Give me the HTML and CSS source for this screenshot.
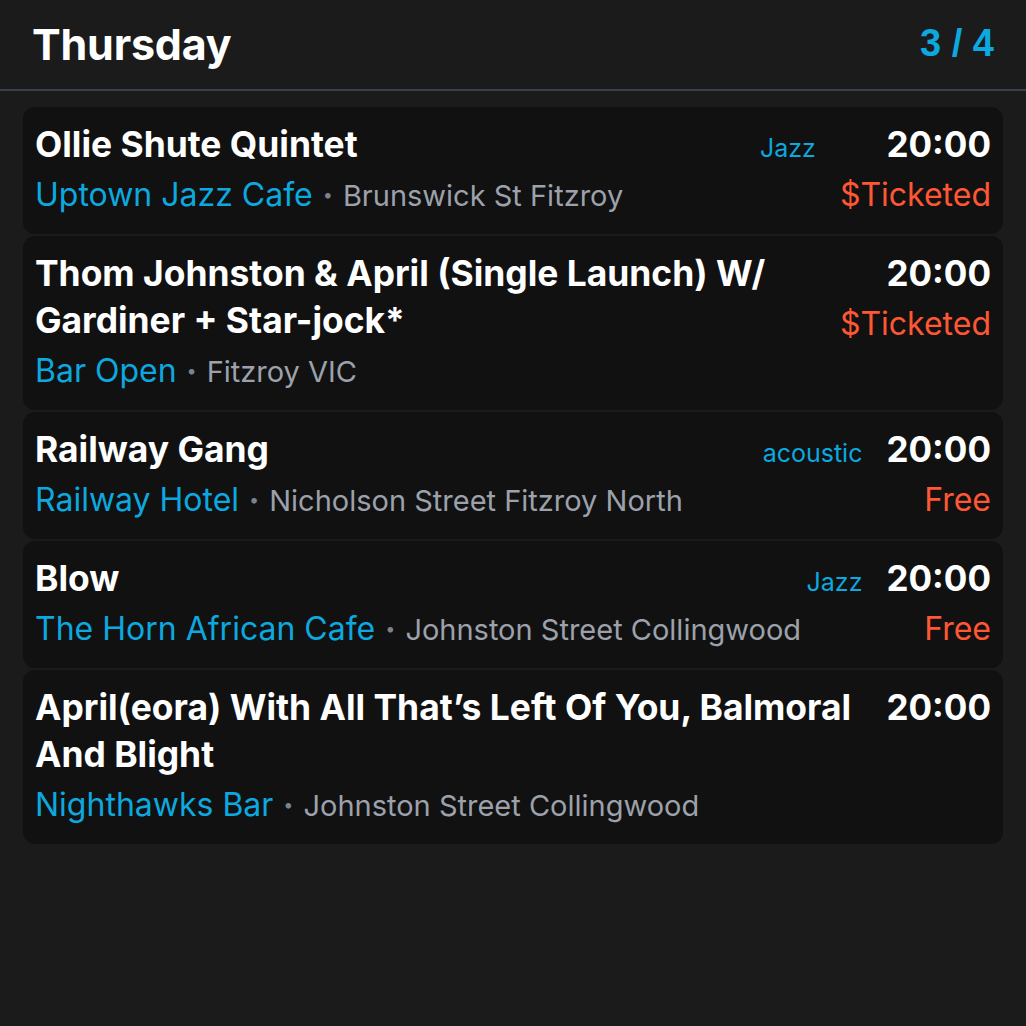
FILE: index.html
```html
<!DOCTYPE html>
<html>
<head>
<meta charset="utf-8">
<link rel="stylesheet" href="styles.css">
</head>
<body>
<div class="screen">
  <header class="topbar">
    <h1 class="day">Thursday</h1>
    <div class="pager">3 / 4</div>
  </header>
  <main class="list">
    <article class="card">
      <div class="main">
        <div class="title-row">
          <div class="title">Ollie Shute Quintet</div>
          <div class="genre">Jazz</div>
        </div>
        <div class="venue"><span class="venue-name">Uptown Jazz Cafe</span><span class="dot">•</span><span class="addr">Brunswick St Fitzroy</span></div>
      </div>
      <div class="side">
        <div class="time">20:00</div>
        <div class="price">$Ticketed</div>
      </div>
    </article>
    <article class="card">
      <div class="main">
        <div class="title-row">
          <div class="title">Thom Johnston &amp; April (Single Launch) W/ Gardiner + Star-jock*</div>
        </div>
        <div class="venue"><span class="venue-name">Bar Open</span><span class="dot">•</span><span class="addr">Fitzroy VIC</span></div>
      </div>
      <div class="side">
        <div class="time">20:00</div>
        <div class="price">$Ticketed</div>
      </div>
    </article>
    <article class="card">
      <div class="main">
        <div class="title-row">
          <div class="title">Railway Gang</div>
          <div class="genre">acoustic</div>
        </div>
        <div class="venue"><span class="venue-name">Railway Hotel</span><span class="dot">•</span><span class="addr">Nicholson Street Fitzroy North</span></div>
      </div>
      <div class="side">
        <div class="time">20:00</div>
        <div class="price">Free</div>
      </div>
    </article>
    <article class="card">
      <div class="main">
        <div class="title-row">
          <div class="title">Blow</div>
          <div class="genre">Jazz</div>
        </div>
        <div class="venue"><span class="venue-name">The Horn African Cafe</span><span class="dot">•</span><span class="addr">Johnston Street Collingwood</span></div>
      </div>
      <div class="side">
        <div class="time">20:00</div>
        <div class="price">Free</div>
      </div>
    </article>
    <article class="card">
      <div class="main">
        <div class="title-row">
          <div class="title">April(eora) With All That’s Left Of You, Balmoral And Blight</div>
        </div>
        <div class="venue"><span class="venue-name">Nighthawks Bar</span><span class="dot">•</span><span class="addr">Johnston Street Collingwood</span></div>
      </div>
      <div class="side">
        <div class="time">20:00</div>
      </div>
    </article>
  </main>
</div>
</body>
</html>
```
FILE: styles.css
```css
* { box-sizing: border-box; }
html, body {
  margin: 0;
  padding: 0;
  background: #1b1b1b;
  font-family: Inter, "Noto Sans", sans-serif;
}
.screen {
  width: 1026px;
  height: 1026px;
  background: #1b1b1b;
}
.topbar {
  display: flex;
  justify-content: space-between;
  align-items: center;
  height: 91px;
  padding: 0 32px 2px 32px;
  border-bottom: 2px solid #3a404b;
}
.day {
  margin: 0;
  font-size: 43px;
  font-weight: 700;
  color: #ffffff;
  letter-spacing: -0.2px;
}
.pager {
  font-family: "Liberation Sans", Arial, sans-serif;
  font-size: 38px;
  font-weight: 700;
  color: #0ca8df;
}
.list {
  display: flex;
  flex-direction: column;
  gap: 2px;
  padding: 16px 23px;
}
.card {
  display: flex;
  gap: 24px;
  background: #111111;
  border-radius: 12px;
  padding: 14px 12px 17px 12px;
}
.main {
  flex: 1;
  min-width: 0;
}
.title-row {
  display: flex;
  align-items: baseline;
  justify-content: space-between;
  gap: 20px;
}
.title {
  font-size: 35.4px;
  line-height: 47px;
  font-weight: 700;
  color: #ffffff;
}
.genre {
  font-size: 25px;
  color: #0ca8df;
  white-space: nowrap;
}
.venue {
  margin-top: 6px;
  font-size: 32px;
  line-height: 42px;
  white-space: nowrap;
}
.venue-name { color: #0ca8df; }
.dot {
  color: #7c818a;
  font-size: 18px;
  margin: 0 10px;
  vertical-align: 5px;
}
.addr {
  color: #9ca1ab;
  font-size: 29px;
}
.side {
  display: flex;
  flex-direction: column;
  align-items: flex-end;
}
.time {
  font-size: 35px;
  line-height: 47px;
  font-weight: 700;
  color: #ffffff;
}
.price {
  margin-top: 6px;
  font-size: 32px;
  line-height: 42px;
  color: #ff5733;
}
```
